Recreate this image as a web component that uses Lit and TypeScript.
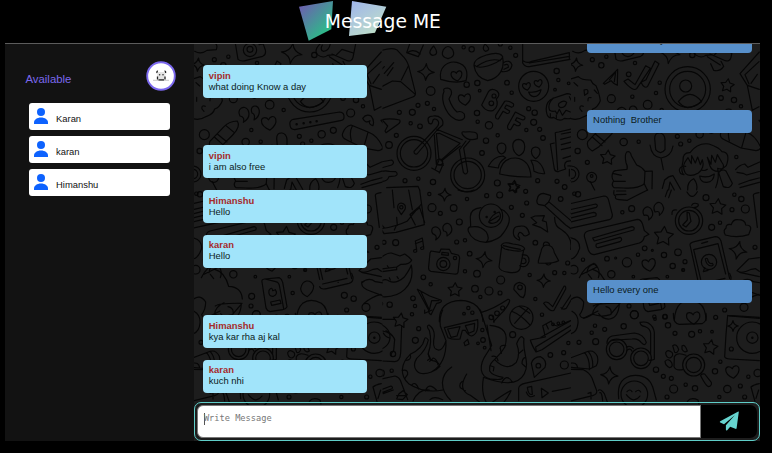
import { LitElement, html, svg, css } from "lit";
import { customElement, property } from "lit/decorators.js";

type Message = { from?: string; text: string };
type Doodle = {
  x: number;
  y: number;
  circles?: number[][];
  stars?: number[][];
  sparkles?: number[][];
  hearts?: number[][];
  paths?: string[];
};

const people = ["Karan", "karan", "Himanshu"];

const messages: Message[] = [
  { text: "what about today" },
  { from: "vipin", text: "what doing Know a day" },
  { text: "Nothing\u00a0 Brother" },
  { from: "vipin", text: "i am also free" },
  { from: "Himanshu", text: "Hello" },
  { from: "karan", text: "Hello" },
  { text: "Hello every one" },
  { from: "Himanshu", text: "kya kar rha aj kal" },
  { from: "karan", text: "kuch nhi" },
];

// Wallpaper sections. Each is drawn on a 3x grid from its own origin.
// Circles: cx, cy, r. Stars, sparkles, hearts: cx, cy, radius, rotation.
const middle: Doodle[] = [
  {
    x: 380, y: 40,
    circles: [
      [251, 22, 5], [275, 28, 8], [361, 12, 6], [391, 23, 5], [407, 46, 6], [152, 153, 13], [142, 190, 6], [162, 207, 5],
      [97, 217, 9], [114, 196, 6], [58, 217, 6], [92, 250, 5], [120, 259, 7], [49, 286, 6], [27, 315, 10], [299, 152, 4],
      [260, 134, 8], [292, 129, 8], [381, 128, 7], [395, 158, 5], [291, 219, 8], [327, 256, 11], [293, 245, 5], [318, 302, 8],
      [353, 286, 5], [306, 339, 7], [446, 206, 6], [464, 218, 8], [461, 247, 9], [439, 270, 5], [479, 268, 6], [489, 294, 7],
      [530, 93, 8], [535, 120, 5], [525, 149, 4], [566, 130, 4], [75, 422, 6], [115, 416, 5], [159, 426, 8], [352, 429, 9],
      [473, 422, 6], [531, 424, 6], [554, 441, 7], [102, 340, 51], [102, 340, 41], [263, 405, 51], [263, 405, 41],
      [461, 139, 45], [342, 168, 6], [334, 190, 7], [179, 366, 9],
    ],
    sparkles: [[138, 96, 25, 3]],
    stars: [[401, 440, 19, 8]],
    hearts: [[230, 107, 18, -8], [254, 178, 20, -8], [440, 139, 13, -12], [475, 130, 13, -12]],
    paths: [
      "M-10 40 L5 31 Q35 22 50 29 L72 52 Q84 65 89 89 L106 157 Q108 168 98 171 L-10 212 M-10 148 L37 123 L62 125 L106 163 M85 78 L64 120 M-8 100 L13 80 M13 100 L41 68 M22 107 L39 83",
      "M89 12 L80 38 L115 50 L130 15 M84 37 Q101 25 121 42",
      "M161 18 Q180 44 158 46 Q140 40 161 18Z M190 29 Q204 10 218 29 Q228 51 204 56 Q180 51 190 29Z M315 12 Q336 30 316 34 Q304 27 315 12Z",
      "M182 118 C176 82 202 62 230 67 C262 75 264 99 258 122 Q225 132 182 118Z",
      "M282 74 C283 50 352 29 367 48 C377 61 300 94 284 76 M282 77 C286 104 301 117 323 122 C360 114 376 84 367 49 M370 68 Q390 57 396 75 Q393 97 366 95 M373 75 Q386 69 385 82 L372 88 M292 78 Q331 52 361 62",
      "M428 10 V69 Q436 83 452 79 L570 58 M430 63 Q440 70 452 65 L568 38 V57 M448 69 L569 49",
      "M446 156 Q465 159 483 149 Q479 170 461 170 Q450 168 446 156Z",
      "M192 154 Q187 144 203 144 Q217 147 214 163 L207 177 Q217 205 231 216 Q245 211 253 222 Q258 240 237 241 C202 236 179 183 192 154Z",
      "M305 195 L326 154 Q335 143 351 153 Q363 165 349 177 Q358 198 340 211 Q319 218 305 195Z",
      "M347 226 L374 184 Q383 180 400 191 Q403 199 395 202 L379 195 L374 204 L389 213 Q388 222 380 220 L369 214 L355 237 Q345 238 347 226Z M383 257 L406 216 L434 230 Q437 238 429 240 L411 233 L406 241 L421 250 Q422 258 411 257 L402 252 L392 269 Q381 270 383 257Z",
      "M6 239 Q31 234 59 240 Q63 247 54 253 L18 278 L15 273 L23 258Z M-5 309 L6 328 L-5 334",
      "M147 250 Q137 228 160 228 C179 226 192 238 188 255 L174 267 L111 342 Q102 344 102 334 L171 261 Q180 250 173 241 Q160 232 158 244 Q156 255 147 250 M170 268 L247 299 M178 280 L240 310 L184 360 Q176 361 176 350 L169 281Z M163 285 L169 373 M247 283 Q242 273 255 276 Q292 273 292 285 V296 Q263 306 247 283Z M258 303 L240 327 M270 302 L251 324 L263 395 Q259 408 250 397 L238 328 M184 363 L241 318 M176 362 L166 387 M190 371 L178 399 M155 384 Q168 391 178 397 M170 373 L190 376",
      "M365 309 C345 310 350 336 364 342 C381 338 383 310 365 309Z M416 298 C390 300 395 337 417 347 C440 337 440 300 416 298Z M467 321 C449 323 451 345 467 356 C485 344 484 323 467 321Z M359 402 Q363 353 407 354 Q450 358 453 411 Q403 412 359 402Z M325 379 Q341 348 369 348 L377 353 Q356 366 355 384Z M453 361 Q484 358 494 401 Q475 402 462 394 Q461 374 453 361Z",
      "M500 219 Q493 184 522 174 L561 161 Q572 161 579 169 M500 219 Q503 238 521 232 Q540 247 553 235 Q580 240 577 225 M520 174 Q501 193 509 211 Q516 216 526 213 L531 222 L538 208 L547 226 L558 211 L571 216 M537 190 Q552 178 560 187 Q557 202 543 203 Q532 199 537 190Z M511 221 V232 M529 225 V236 M568 170 L575 183",
      "M526 281 Q524 277 536 276 L574 267 M526 281 L533 390 M544 282 L574 276 M542 298 L574 290 M544 314 L574 306 M544 329 L574 322 M549 355 L574 347 M523 309 L511 312 L523 387 Q526 397 537 394 L557 387 Q549 371 561 364 Q580 358 590 375 Q601 390 601 410 M563 378 Q583 374 583 400 Q578 418 573 422 M568 388 V408",
      "M-4 367 L35 360 Q46 368 35 375 L-4 386 M-5 402 Q6 389 28 394 L47 395 Q57 404 45 408 L27 410 Q20 430 -5 422 M20 443 L114 439 L119 450",
    ],
  },
  {
    x: 380, y: 190,
    circles: [
      [148, 12, 5], [156, 53, 12], [181, 70, 6], [221, 54, 10], [261, 27, 5], [320, 17, 6], [359, 15, 9], [437, 4, 6],
      [440, 39, 6], [394, 52, 6], [238, 96, 9], [230, 156, 6], [255, 151, 5], [427, 76, 6], [542, 27, 7], [47, 158, 9],
      [12, 157, 6], [466, 158, 7], [269, 191, 7], [291, 251, 10], [255, 244, 5], [130, 262, 7], [152, 283, 5], [99, 325, 7],
      [105, 348, 5], [29, 344, 8], [285, 296, 10], [327, 303, 12], [301, 321, 5], [362, 270, 12], [360, 309, 6], [524, 248, 6],
      [553, 249, 5], [563, 219, 6], [449, 255, 5], [466, 327, 5], [486, 374, 5], [4, 341, 4], [190, 222, 20], [190, 222, 10],
      [225, 204, 5], [64, 52, 5], [333, 77, 35], [420, 292, 7], [320, 81, 2], [344, 66, 2], [252, 371, 4],
      [265, 354, 5], [277, 368, 5], [334, 382, 7], [351, 370, 7], [368, 354, 6],
    ],
    sparkles: [[194, 14, 19, 3], [312, 209, 24, 8], [491, 272, 20, 3]],
    stars: [[225, 300, 22, 2], [401, -8, 17, 20]],
    paths: [
      "M-6 102 L12 131 L48 127 L133 104 L119 0 M6 126 L2 116 Q43 112 81 94 L124 42 M12 112 L5 105 M90 73 L120 48 M106 105 L90 74 L119 53 L134 97 M37 0 L42 53 M50 82 L52 106 M86 0 L97 59 M43 120 L48 109 M64 74 L54 58 Q50 41 63 39 Q80 42 75 58Z",
      "M158 131 C147 113 171 102 180 120 Q187 137 167 150 Q173 136 158 131Z M191 123 C182 104 204 91 213 108 Q222 126 201 138 Q203 124 191 123Z",
      "M110 179 L106 153 L127 144 L131 171 M106 161 L128 153 M101 181 Q112 174 110 185 Q99 190 101 181Z M122 173 Q133 166 131 177 Q121 181 122 173Z",
      "M153 183 L179 187 L183 177 L208 178 L214 190 L234 195 Q241 199 238 210 L234 247 Q232 254 222 252 L153 244 Q144 242 146 229 L150 189Z M186 187 L205 189 V196 L185 194Z",
      "M303 53 Q269 57 271 83 L272 110 Q262 113 265 124 Q277 155 318 157 Q357 151 371 128 Q398 91 382 72 Q373 60 362 57 M272 111 Q301 105 319 126 Q331 148 318 157 M326 96 Q337 71 358 66 Q368 83 350 96 Q334 104 326 96Z M330 93 L356 78 M234 0 Q258 10 282 0",
      "M400 130 Q399 108 417 109 Q443 103 448 132 Q433 144 428 132 Q416 120 414 138 Q421 144 418 151 Q401 144 400 130Z",
      "M366 163 Q373 154 399 162 Q433 166 434 177 Q426 190 375 177 Q359 169 366 163Z M365 169 L357 231 Q359 244 387 247 Q414 251 420 236 L431 180 M426 195 Q448 191 447 214 Q440 237 419 227 M426 204 Q439 203 438 216 Q434 224 423 219 M370 167 Q391 173 421 178",
      "M475 213 L483 185 Q486 166 500 165 Q519 165 523 188 L536 212 Q516 222 475 219Z M490 166 Q490 153 502 157 Q510 161 508 167 M498 221 Q506 230 515 219",
      "M453 83 L465 78 L493 77 L487 92 L499 96 L503 126 L481 112 L458 104 L470 98Z",
      "M472 27 Q474 11 490 10 L511 16 Q514 24 506 35 L573 92 M506 36 L494 47 L557 105 L574 117 M494 47 L475 43 Q468 37 472 27 M524 82 Q523 110 545 119 Q579 142 572 178 M573 69 H600 M574 80 L600 77",
      "M-4 208 Q19 188 34 189 L60 198 L74 192 Q88 201 95 210 Q90 224 63 223 L50 231 L-4 238 M-3 246 L50 239 L50 231 M-4 279 Q14 262 27 273 Q47 284 73 261 Q89 239 94 225 C106 285 62 329 -5 319 M0 232 L4 238 M22 227 L26 234 M4 270 L7 278 M28 263 L31 270 M51 260 L55 266",
      "M112 298 L149 318 L184 331 Q186 338 170 340 L153 374 Q146 372 146 361Z M122 304 L148 360 L155 332 L177 332",
      "M178 395 Q176 333 243 331 Q304 334 309 394 M304 367 Q340 358 384 328 Q398 327 372 362 Q352 382 341 395 M421 320 L402 299 Q400 281 418 277 Q440 282 436 299 Q437 312 430 323Z",
      "M491 340 Q495 333 505 338 L518 350 L552 289 Q558 286 557 297 L522 361 Q512 368 491 340Z M545 357 L575 312 M543 353 Q550 361 559 355 L576 325",
      "M395 364 Q422 374 449 404 M444 355 L404 400 M418 349 L449 370 M573 142 Q602 151 596 175 M574 228 Q593 231 592 244 Q583 255 574 249",
    ],
  },
  {
    x: 380, y: 310,
    circles: [
      [96, 13, 5], [116, 56, 6], [106, 91, 9], [3, 189, 10], [35, 182, 5], [307, 60, 5],
      [294, 100, 4], [309, 90, 7], [314, 113, 4], [398, 74, 9], [511, 135, 7], [551, 128, 6], [565, 99, 5],
      [553, 165, 12], [475, 167, 7], [424, 23, 35], [-8, 81, 38], [39, 132, 8], [519, 43, 4], [535, 40, 4], [550, 37, 4],
    ],
    stars: [[61, 32, 23, 8]],
    paths: [
      "M-10 28 L44 28 M65 47 L62 128 Q61 153 44 155 L-10 152 M8 63 Q34 68 44 88 L41 122 Q30 132 35 139 M18 62 Q43 76 44 91 M10 69 Q15 80 29 84 M134 0 V10 L156 0",
      "M188 0 Q178 22 181 48 L198 92 Q186 128 169 118 Q156 114 163 77 Q163 56 147 45 Q137 47 148 61 Q157 95 145 129 Q146 148 158 152 Q174 153 180 169 Q168 182 154 186 C110 202 94 172 110 145 Q139 120 145 90 Q136 77 133 89 Q128 115 91 133 C62 160 58 196 86 221 Q132 251 189 240 M198 92 Q200 160 154 186",
      "M91 133 Q95 149 80 151 M67 181 Q85 177 83 193 L74 206 M96 224 Q108 213 116 237 M136 243 Q146 215 169 240 M144 132 L151 145 L143 151 M149 154 L160 144 Q171 148 174 165 M99 273 Q116 236 148 240",
      "M193 53 L293 29 M193 53 L204 83 Q220 90 240 87 L247 61 L256 61 Q264 77 275 78 Q297 72 293 29 M203 57 L240 50 L231 78 L213 82Z M256 47 L284 40 L282 63 L266 70Z",
      "M252 98 L263 88 L267 102 L255 107Z M301 0 L335 106 Q330 116 313 142 C293 180 306 209 345 208 Q369 210 369 202 Q337 197 329 183 C324 151 353 151 374 112 Q394 51 330 46 M321 45 L333 122 M328 16 Q342 13 342 37",
      "M344 149 Q380 186 409 157 Q422 133 410 101 Q423 68 432 87 C426 125 451 157 433 191 Q408 239 310 202 M429 120 L417 130 M436 142 Q426 145 426 161 L437 171 M360 115 Q361 103 377 107 M361 115 L364 130 M336 139 Q350 135 354 152 M331 167 L342 171 L340 183 M365 219 Q379 188 397 216",
      "M215 171 C180 195 177 238 213 272 M260 192 Q231 240 271 256 L298 275 M247 214 Q236 222 241 233 L256 242 M310 205 Q303 249 318 275 M338 276 Q382 245 393 242 Q384 262 371 278",
      "M-5 209 L45 198 Q57 201 61 211 L83 269 M3 239 L33 228 Q40 231 36 236 L6 248Z M9 251 L40 240 M50 267 L57 251 L69 242 L82 254 L68 269Z M50 257 L80 256 M150 269 Q162 257 188 269",
      "M451 90 L496 81 L488 47 L514 33 Q516 45 532 48 L574 31 M451 90 Q455 105 468 126 L486 119 L573 60 M469 125 L467 111 L574 46 M499 44 L505 57 M483 82 L576 30",
      "M463 202 L454 160 Q459 141 482 140 Q503 151 495 172Z",
      "M416 272 V234 Q418 224 434 220 L573 189 M442 232 L455 229 L457 253 Q445 257 442 232Z M439 246 Q446 267 463 257 M484 235 L505 249 L486 263Z M517 244 L574 233 M574 130 L600 120 M575 155 Q600 152 596 166 M575 164 H584",
    ],
  },
];

const edge: Doodle[] = [
  {
    x: 572, y: 40,
    circles: [
      [61, 59, 6], [88, 76, 8], [103, 50, 5], [189, 69, 5], [170, 103, 7], [263, 128, 5], [252, 159, 5], [118, 176, 12],
      [181, 170, 5], [227, 194, 13], [347, 148, 68], [347, 148, 54], [341, 138, 18], [447, 174, 7], [486, 180, 8],
      [507, 199, 5], [31, 284, 15], [17, 333, 8], [46, 367, 6], [155, 306, 11], [200, 305, 5], [316, 289, 6],
      [326, 312, 6], [352, 302, 5], [383, 283, 11], [418, 271, 9], [493, 351, 5], [-3, 402, 24], [-3, 402, 14],
      [59, 412, 15], [59, 408, 4],
    ],
    sparkles: [[12, 74, 20, 5]],
    stars: [[466, 137, 21, 8], [107, 353, 23, 5]],
    paths: [
      "M-8 118 L19 110 Q30 121 56 120 Q60 131 72 137 Q80 154 83 171 L85 182 Q77 202 62 207 Q58 222 38 229 Q14 244 -7 234 M36 150 Q51 144 47 160 L38 166Z M6 128 L17 138 M34 199 Q22 194 24 207 L30 214 M67 150 L76 160 M57 173 Q47 170 48 182 M8 172 V184",
      "M94 130 L137 88 L136 136 Q124 131 117 122 L98 133Z M112 120 L131 96 L127 125",
      "M156 124 L168 117 L189 134 L221 77 L235 85 L194 146 Q184 156 156 124Z M207 127 L222 119 L249 63 L261 71 L227 139 Q217 148 207 127Z",
      "M320 184 Q354 142 389 185 M319 184 Q329 199 347 203 Q366 201 389 185",
      "M504 101 L562 36 M504 101 L526 136 L541 211 L561 200 M526 136 L562 148 M531 132 L519 104 L561 65 M537 130 L556 103",
    ],
  },
  {
    x: 568, y: 40,
    circles: [
      [373, 45, 8], [281, 210, 5], [482, 219, 12], [184, 270, 5],
      [180, 30, 20], [180, 28, 9], [320, 253, 2], [341, 250, 2], [361, 247, 2], [380, 244, 2],
    ],
    sparkles: [[305, 40, 31, 8]],
    hearts: [[237, 249, 24, -8]],
    paths: [
      "M14 34 Q33 45 51 31 L79 29 Q84 14 75 10 M136 10 L144 58 Q154 66 169 61 L218 49 Q229 45 226 30 L219 10 M219 12 L207 14",
      "M391 11 Q371 30 382 44 Q399 57 413 46 L432 44 M421 11 Q417 33 400 34 Q389 30 397 15 M418 50 L457 75 M426 42 L472 62 Q485 66 489 52 L497 12 M490 39 L456 28 L440 44 M428 71 L437 91 Q456 96 467 79 L459 64",
      "M150 228 C139 205 164 193 174 210 Q184 232 160 247 Q165 231 150 228Z M186 219 C177 198 201 190 207 208 Q212 228 192 240 Q197 222 186 219Z",
      "M300 255 Q297 243 310 238 L449 216 Q464 217 462 233 Q462 240 451 242 L314 269 Q301 269 300 255Z",
      "M59 305 L102 260 Q116 244 142 243 Q153 260 128 285 L93 320 L73 333 Q54 322 59 305 M73 291 L102 317 M82 282 L111 306 M107 256 L133 278",
      "M458 280 Q465 259 483 255 L536 277 Q561 286 578 321 Q578 330 564 332 L519 324 L469 299 Q454 293 458 280 M487 258 Q477 276 484 303 M534 277 L521 323",
      "M260 295 Q260 278 276 279 Q289 281 291 298 L291 329 Q278 347 263 329Z M246 315 Q251 351 279 354 Q310 350 315 318 M279 354 L286 389",
      "M518 235 Q529 220 544 229 Q554 241 549 257 Q534 253 540 242 Q526 252 518 235Z M600 235 L573 241 L586 257 L581 279 L600 273",
      "M134 400 Q136 391 148 391 L177 388 Q180 380 174 368 Q169 345 176 336 Q187 331 190 347 L206 375 Q221 380 231 394 L229 432 Q208 447 167 444 L138 443 Q128 435 137 423 Q129 412 134 400 L160 406 M136 424 H172 M231 394 L253 393 L252 446 M228 430 L238 450",
      "M348 404 Q337 399 345 363 Q343 337 366 338 Q389 307 423 312 Q455 323 462 335 Q489 337 475 377 Q462 391 449 385 Q455 412 443 443 M348 404 Q335 404 334 390 Q337 377 353 379 M359 450 Q357 425 377 416 Q390 432 386 450 M352 400 Q342 381 351 366 L360 353 L370 371 L371 347 L382 369 L389 351 L397 374 L403 359 Q411 384 391 399 Q366 413 352 400Z M418 352 L429 373 L431 346 L442 367 L448 344 L461 366 Q475 383 454 394 Q432 395 426 378Z M395 408 Q421 415 439 402 Q437 426 416 427 Q397 428 395 408Z M452 398 Q463 385 474 393 L493 430 Q488 448 466 440Z M401 390 Q410 394 418 388",
      "M283 445 L290 420 Q302 408 315 407 L338 448 M302 450 L306 426 L319 450 M67 425 L80 450",
      "M503 389 Q515 374 530 372 L540 382 L589 360 L600 369 M507 397 L525 400 L536 405 L600 387 M513 433 L546 421 L600 407 M516 443 L600 420",
    ],
  },
  {
    x: 572, y: 190,
    circles: [
      [18, 13, 8], [151, 67, 5], [179, 56, 9], [351, 92, 41], [351, 92, 31], [402, 23, 9], [487, 14, 5], [508, 27, 8],
      [480, 59, 6], [520, 57, 12], [419, 112, 9], [444, 98, 5], [549, 172, 6], [5, 239, 13], [33, 209, 5], [105, 206, 7],
      [131, 204, 3], [165, 217, 14], [118, 253, 11], [184, 260, 4], [198, 194, 5], [218, 175, 7], [241, 181, 3], [276, 195, 8],
      [318, 187, 10], [302, 228, 8], [339, 215, 6], [333, 240, 4], [171, 348, 6], [187, 374, 12], [247, 380, 5], [279, 380, 7],
      [458, 360, 6], [516, 352, 12], [431, 382, 6], [7, 11, 5], [411, 216, 23], [286, 260, 4],
    ],
    stars: [[437, 51, 25, 5], [275, 139, 30, 5]],
    sparkles: [[498, 181, 27, 12]],
    hearts: [[231, 224, 22, -10]],
    paths: [
      "M-5 41 L96 18 Q107 18 110 31 L121 74 Q122 85 112 89 L-5 115 M-5 59 L71 42 Q80 45 73 52 L-5 72 M-5 84 L65 67 Q76 69 71 78 L-5 96",
      "M48 123 L196 88 Q207 88 212 103 L217 122 L231 133 L217 140 Q215 154 202 159 L67 194 Q54 194 49 180 L37 139 Q36 127 48 123Z M62 144 L180 110 Q190 111 185 120 L67 153Z M73 162 L144 142 Q154 147 144 155 L79 173 Q69 173 73 162Z",
      "M216 76 C206 56 228 41 238 58 Q250 76 230 90 Q233 72 216 76Z M249 66 C238 44 262 26 272 46 Q281 60 262 76 Q265 60 249 66Z",
      "M300 73 Q298 57 314 60 M359 46 Q364 36 378 42 Q383 50 366 53 M345 67 L352 69 L357 94 L342 111 L332 105 L346 90Z",
      "M462 115 Q461 100 478 104 Q483 87 498 89 Q520 89 521 105 Q543 105 533 126 L530 134 Q496 145 460 135 Q452 121 462 115Z",
      "M354 165 Q353 159 367 155 L430 140 Q442 140 447 153 L473 266 M354 165 L377 268 M365 179 L438 161 L461 252 M365 179 L386 268 M389 160 L407 155 M398 233 L394 245 L408 241 M400 207 Q407 201 408 212 Q413 224 421 220 Q427 226 418 228 Q403 227 400 207Z",
      "M126 2 Q123 16 131 18 Q127 28 141 29 L166 31 L201 13 L227 0 M132 14 L162 13 M134 3 H161 M280 20 L287 0 M290 23 L298 0 M345 6 Q360 33 376 5",
      "M-5 143 Q24 148 23 175 Q12 207 -5 207 M22 263 Q37 231 66 220 L75 231 L30 253 M45 248 Q46 225 70 222 Q87 242 79 263 M59 266 L49 253 M495 242 L530 207 L562 203 M495 242 Q506 253 538 238 L551 236 L562 244 M503 247 L562 260 M544 16 Q543 11 561 8 M544 16 L556 112",
      "M-5 330 Q18 310 35 336 Q35 358 23 374 Q29 394 62 373 Q63 350 90 338 M62 373 Q90 383 115 374 L144 340 M102 350 Q121 354 117 373 M64 348 Q76 339 142 340 Q140 383 113 387 Q93 389 80 371",
      "M307 391 Q309 354 326 340 Q350 322 382 340 Q401 353 402 391 M472 378 L562 385 M510 340 Q532 321 561 313",
    ],
  },
  {
    x: 568, y: 190,
    circles: [[346, 240, 4], [308, 309, 5], [463, 316, 9], [491, 326, 8], [185, 319, 9]],
    paths: [
      "M216 276 Q213 269 224 267 L268 263 Q275 266 278 277 L291 350 Q288 357 278 359 L240 365 Q231 362 228 354Z M225 267 L257 275 Q267 276 269 291 L281 356 M237 301 Q246 288 248 302 L256 299 Q265 313 250 319 Q234 320 237 301Z M242 336 L270 330 L273 340 L245 346Z",
      "M350 273 Q365 272 371 288 Q371 305 352 320 Q333 311 332 296 Q336 275 350 273Z",
      "M389 290 Q392 300 410 296 L477 280 Q491 276 489 261 L485 250 M398 282 L471 265 M444 277 L445 277",
      "M516 275 Q510 292 542 304 L600 325 M515 279 Q535 260 556 275 L600 282",
      "M74 238 Q105 246 116 289 Q155 291 157 327",
    ],
  },
  {
    x: 572, y: 310,
    circles: [
      [187, 14, 12], [249, 27, 4], [279, 20, 6], [288, 46, 8], [309, 70, 6], [359, 73, 9], [384, 64, 5], [420, 65, 4],
      [69, 47, 5], [59, 68, 5], [98, 58, 6], [155, 49, 8], [21, 97, 6], [71, 95, 9],
      [134, 118, 31], [134, 118, 22], [207, 145, 31], [207, 145, 22], [252, 179, 8], [274, 199, 6], [298, 205, 6],
      [365, 165, 33], [365, 165, 23], [445, 155, 5], [429, 184, 8], [541, 83, 47], [541, 83, 17], [541, 83, 2],
      [478, 117, 6], [505, 228, 6], [529, 200, 5], [466, 237, 11], [442, 261, 5], [305, 237, 12], [341, 224, 5],
      [369, 235, 8], [285, 261, 6], [518, 261, 6], [557, 189, 11], [187, 253, 40],
    ],
    stars: [[415, 112, 23, 10]],
    sparkles: [[112, 196, 26, 5], [483, 48, 16, 0]],
    hearts: [[364, 23, 22, -5], [482, 185, 22, -8]],
    paths: [
      "M105 100 Q105 83 120 78 L187 69 Q215 72 223 97 Q218 110 208 98 Q198 84 180 87 L117 91 M204 37 Q220 34 229 39 Q245 49 247 67 V148 Q243 151 231 151 M204 37 Q205 48 220 50 Q235 56 236 70 V130 M163 111 Q176 105 184 116 M166 120 Q175 113 180 124",
      "M-5 144 L49 124 Q66 119 76 139 Q80 157 73 167 L53 177 L-5 172 M38 128 Q54 147 52 179 M49 125 Q64 142 62 171 M-5 160 Q14 155 17 173 M-5 178 L34 179 Q52 187 60 204 L74 242 Q76 253 62 257 L-5 273 M79 241 Q87 235 97 251 L106 276 M83 248 Q90 245 92 273 M48 250 L57 247 V267",
      "M140 266 Q132 199 189 196 Q235 195 245 241 L253 270 M165 245 Q174 235 180 245 M191 245 Q200 236 206 246 M163 254 Q185 283 204 258",
      "M304 10 Q303 41 322 43 L390 41 Q407 33 402 10 M342 136 Q315 125 307 140 L306 170 Q311 184 335 178 M281 128 Q286 116 300 127 Q306 138 294 144 Q282 143 281 128Z M302 107 Q314 99 320 119 Q316 130 308 127Z M330 108 Q339 101 346 123 Q337 130 330 118Z M279 154 Q290 143 299 158 Q304 170 293 173 Q280 167 279 154Z M386 197 Q388 190 398 192 L418 217 Q420 228 409 230 Q402 228 386 197Z",
      "M467 16 L562 22 M467 16 Q461 75 458 140 Q459 146 474 147 L562 152 M537 231 Q545 224 562 221 M537 231 L549 275 M346 274 Q357 260 378 270 L381 282 M-4 71 Q15 67 18 40 Q20 15 0 4 M35 25 L78 3 M560 240 L552 265",
    ],
  },
  {
    x: 568, y: 310,
    paths: [
      "M30 435 L38 415 H70 M105 436 Q135 411 157 436 M225 437 L240 420 L265 436 M349 437 Q368 411 395 435 M435 436 V424 H480 V436 M520 432 L562 420",
    ],
  },
];

const starPoints = (r: number) =>
  Array.from({ length: 10 }, (_, i) => {
    const a = (Math.PI * i) / 5 - Math.PI / 2;
    const d = i % 2 ? r * 0.52 : r;
    return `${(Math.cos(a) * d).toFixed(1)},${(Math.sin(a) * d).toFixed(1)}`;
  }).join(" ");

const place = (s: number[]) => `translate(${s[0]} ${s[1]}) rotate(${s[3]})`;

const drawDoodle = (d: Doodle) => svg`
  <g transform="translate(${d.x} ${d.y}) scale(0.33333)">
    ${(d.circles ?? []).map((c) => svg`<circle cx=${c[0]} cy=${c[1]} r=${c[2]} />`)}
    ${(d.stars ?? []).map((s) => svg`<polygon transform=${place(s)} points=${starPoints(s[2])} />`)}
    ${(d.sparkles ?? []).map((s) => svg`<path transform="${place(s)} scale(${s[2] / 10})" d="M0-10Q1-2 10 0Q2 1 0 10Q-1 2-10 0Q-2-1 0-10Z" />`)}
    ${(d.hearts ?? []).map((s) => svg`<path transform="${place(s)} scale(${s[2] / 10})" d="M0 9C-5 6-10 2-9-4C-8-9-2-8 0-4C2-8 8-9 9-4C10 2 5 6 0 9Z" />`)}
    ${(d.paths ?? []).map((p) => svg`<path d=${p} />`)}
  </g>`;

@customElement("chat-wallpaper")
class ChatWallpaper extends LitElement {
  static styles = css`
    :host { display: block; overflow: hidden; background: #1d1d1d; }
    svg { display: block; width: 566px; height: 397px; }
    .ink { fill: none; stroke: #060606; stroke-width: 1.15px; stroke-linejoin: round; stroke-linecap: round; }
    .ink * { vector-effect: non-scaling-stroke; }
  `;
  render() {
    return html`<svg viewBox="194 44 566 397" aria-hidden="true">
      <defs>
        <clipPath id="mid"><rect x="382.500" y="43" width="188.500" height="398" /></clipPath>
        <clipPath id="side"><rect x="571" y="43" width="189.500" height="398" /></clipPath>
      </defs>
      <g class="ink">
        <g clip-path="url(#mid)">${middle.map(drawDoodle)}</g>
        <g clip-path="url(#side)">${edge.map(drawDoodle)}</g>
        <g transform="translate(-378 0)"><g clip-path="url(#side)">${edge.map(drawDoodle)}</g></g>
      </g>
    </svg>`;
  }
}

@customElement("chat-bubble")
class ChatBubble extends LitElement {
  @property() from?: string;
  @property() text = "";
  static styles = css`
    :host { display: block; flex: none; }
    .bubble { box-sizing: border-box; width: 164.6px; padding: 4.5px 6px; border-radius: 4px; font-size: 9.42px; line-height: 11px; color: #0c1a20; }
    .theirs { height: 33px; background: #a1e4fa; }
    .mine { height: 23.6px; margin-left: auto; background: #5890cb; }
    .name { font-weight: bold; color: #a52a2a; }
  `;
  render() {
    return this.from
      ? html`<div class="bubble theirs"><div class="name">${this.from}</div>${this.text}</div>`
      : html`<div class="bubble mine">${this.text}</div>`;
  }
}

@customElement("app-root")
class AppRoot extends LitElement {
  static styles = css`
    :host { display: flex; flex-direction: column; box-sizing: border-box; height: 453px; padding: 0 12px 12px 5px; overflow: hidden; background: #000; font-family: "Liberation Sans", Arial, sans-serif; }
    .header { display: grid; flex: none; height: 43px; border-bottom: 1px solid #5c5c5c; }
    .logo, .title { grid-area: 1 / 1; }
    .logo { width: 90px; height: 42px; margin-left: 293px; }
    .title { margin: 9.5px 0 0 319.8px; font: 18.75px/23px "DejaVu Sans", Verdana, sans-serif; color: #fff; white-space: nowrap; z-index: 1; }
    .body { display: flex; height: 397px; }
    .sidebar { box-sizing: border-box; width: 189px; padding: 17px 24px 0 20.5px; background: #121212; }
    .top { display: flex; justify-content: space-between; height: 42px; margin-right: -5.8px; }
    .available { margin-top: 11px; font-size: 11.35px; line-height: 14px; color: #7b68ee; }
    .avatar { width: 30px; height: 30px; }
    .list { display: flex; flex-direction: column; gap: 6px; padding-left: 3px; }
    .person { display: flex; gap: 8px; box-sizing: border-box; height: 27px; width: 141.5px; padding: 5px 6px; background: #fff; border-radius: 3px; font-size: 9.42px; line-height: 11px; color: #111; }
    .person svg { width: 14px; height: 16px; margin-left: -.5px; }
    .person span { margin-top: 5px; }
    .chat { display: grid; width: 566px; height: 397px; }
    chat-wallpaper, .front { grid-area: 1 / 1; }
    .front { display: flex; flex-direction: column; min-height: 0; z-index: 1; }
    .messages { display: flex; flex-direction: column; justify-content: flex-end; gap: 11.8px; box-sizing: border-box; height: 357.5px; padding: 0 8.3px 8.7px 8.8px; overflow: hidden; }
    .composer { display: flex; box-sizing: border-box; height: 39.5px; padding: 2.4px; border: 1.4px solid #5fcdc8; border-radius: 7px; }
    .field { box-sizing: border-box; width: 503.5px; height: 33px; padding: 7.5px 5.5px; border: 1px solid #777; border-radius: 6px 0 0 6px; background: #fff; font: 8.67px/10px "DejaVu Sans Mono", monospace; color: #777; }
    .caret { display: inline-block; width: 1px; height: 12px; margin: -2px -1px -2px 0; vertical-align: middle; background: #555; }
    .send { display: grid; place-items: center; flex: 1; height: 33px; background: #000; border-radius: 0 7px 7px 0; }
    .send svg { width: 20px; height: 20px; }
  `;
  render() {
    return html`
      <div class="header">
        <svg class="logo" viewBox="298 0 90 42">
          <defs>
            <linearGradient id="dusk" x1="0" y1="0" x2="0.75" y2="0.85"><stop stop-color="#7455b4" /><stop offset="1" stop-color="#2cbc88" /></linearGradient>
            <linearGradient id="mist" x1="0" y1="0" x2="0.7" y2="1"><stop stop-color="#9eb3ec" /><stop offset="1" stop-color="#bfe0c8" /></linearGradient>
          </defs>
          <polygon fill="url(#dusk)" points="299,6.7 333,1 331.3,29.3 308.7,40.7" />
          <polygon fill="url(#mist)" points="352,1 386.3,6.7 375,32.7 349,36" />
        </svg>
        <div class="title">Message ME</div>
      </div>
      <div class="body">
        <div class="sidebar">
          <div class="top">
            <div class="available">Available</div>
            <svg class="avatar" viewBox="0 0 30 30">
              <circle cx="15" cy="15" r="13.8" fill="#fff" stroke="#7b68ee" stroke-width="1.9" />
              <path d="M7 19.300h16" stroke="#bbb" stroke-width=".8" />
              <path d="M11.500 18.500 11 13l1-2h6.500l1 2-.5 5.500z" fill="#e4e4e4" />
              <path d="M11 12q-.5-2 1-1.800M18.500 10.200q1.500-.2 1 1.800M11.500 18.500v-3M19 18.500v-3M12.500 18.800h5.500" fill="none" stroke="#222" stroke-width="1.300" />
              <circle cx="13.600" cy="13.800" r=".8" fill="#333" /><circle cx="17" cy="13.800" r=".8" fill="#333" />
            </svg>
          </div>
          <div class="list">
            ${people.map((p) => html`<div class="person">
              <svg viewBox="0 0 14 16" fill="#0d62fe"><circle cx="7" cy="4" r="4" /><path d="M0 16v-1.500C0 11.500 3 9.400 7 9.400s7 2.100 7 5.100V16z" /></svg>
              <span>${p}</span>
            </div>`)}
          </div>
        </div>
        <div class="chat">
          <chat-wallpaper></chat-wallpaper>
          <div class="front">
            <div class="messages">
              ${messages.map((m) => html`<chat-bubble .from=${m.from} .text=${m.text}></chat-bubble>`)}
            </div>
            <div class="composer">
              <div class="field"><span class="caret"></span>Write Message</div>
              <div class="send">
                <svg viewBox="0 0 20 20" fill="#66d4cf"><path d="M19.300.500Q19.900.300 19.800 1L17.600 17.200Q17.400 18.200 16.400 17.800L11.200 15.700 8.200 19.200Q7.200 19.900 6.900 18.800V14.200L15.800 4.200 5 13.200 1.300 11.600Q.200 11 1.200 10.200Z" /></svg>
              </div>
            </div>
          </div>
        </div>
      </div>`;
  }
}
